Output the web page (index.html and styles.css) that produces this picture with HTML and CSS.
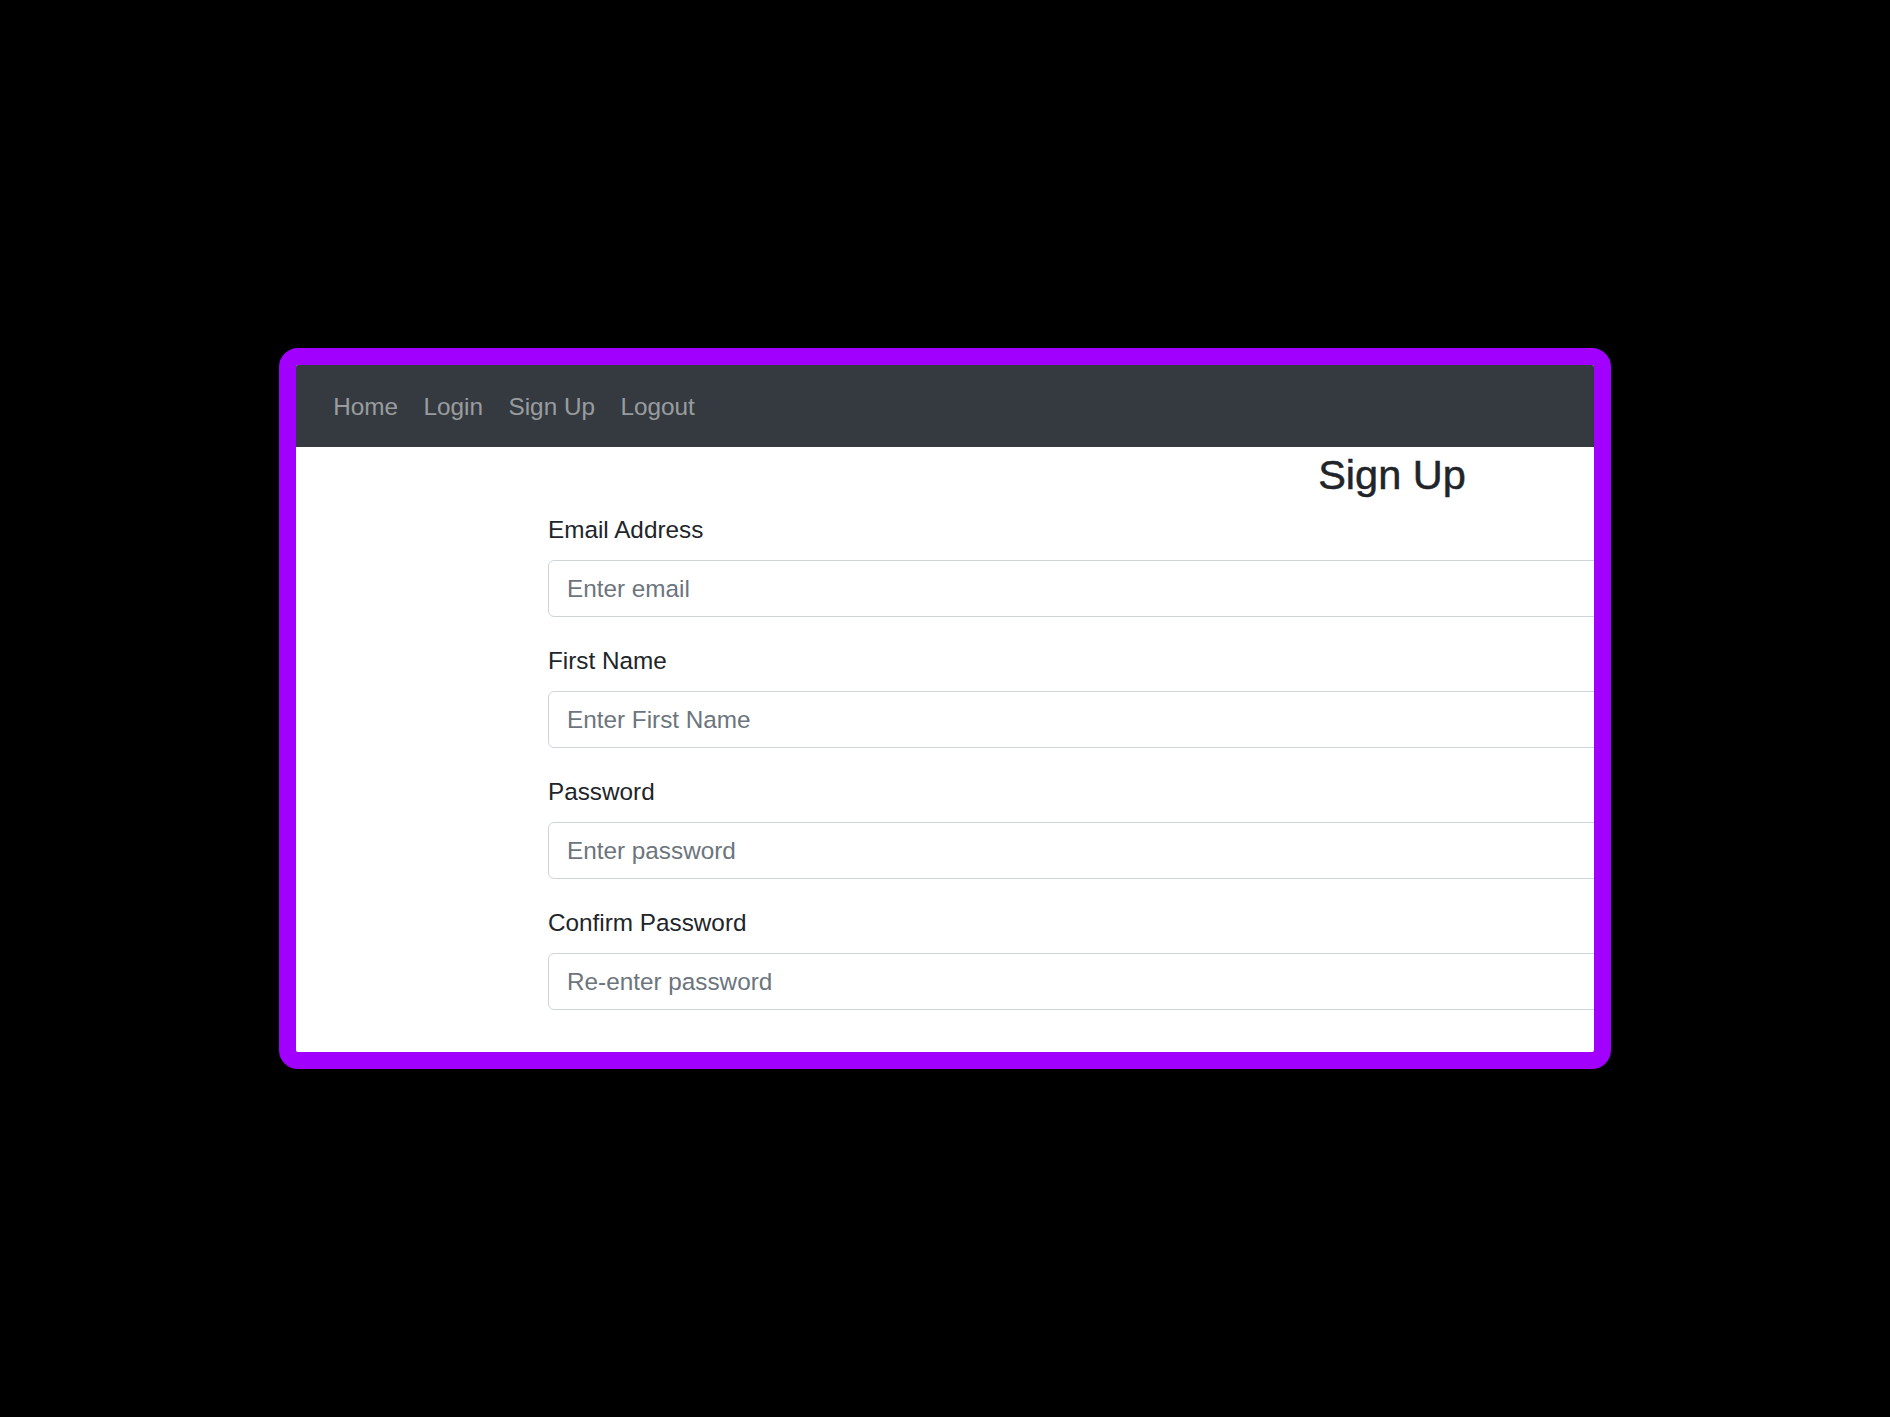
FILE: index.html
```html
<!DOCTYPE html>
<html lang="en">
<head>
<meta charset="utf-8">
<title>Sign Up</title>
<link rel="stylesheet" href="styles.css">
</head>
<body>
  <div class="frame">
    <div class="app">
      <nav class="navbar">
        <a class="nav-link" href="#">Home</a>
        <a class="nav-link" href="#">Login</a>
        <a class="nav-link" href="#">Sign Up</a>
        <a class="nav-link" href="#">Logout</a>
      </nav>
      <main class="content">
        <form class="signup">
          <h3 class="title">Sign Up</h3>
          <div class="group">
            <label class="label" for="email">Email Address</label>
            <input class="control" id="email" type="email" placeholder="Enter email">
          </div>
          <div class="group">
            <label class="label" for="first">First Name</label>
            <input class="control" id="first" type="text" placeholder="Enter First Name">
          </div>
          <div class="group">
            <label class="label" for="pw">Password</label>
            <input class="control" id="pw" type="password" placeholder="Enter password">
          </div>
          <div class="group">
            <label class="label" for="pw2">Confirm Password</label>
            <input class="control" id="pw2" type="password" placeholder="Re-enter password">
          </div>
        </form>
      </main>
    </div>
  </div>
</body>
</html>
```

FILE: styles.css
```css
* { box-sizing: border-box; }

html, body {
  margin: 0;
  background: #000;
}

body {
  padding: 348px 0 0 279px;
  font-family: "Liberation Sans", Arial, sans-serif;
  color: #212529;
}

.frame {
  width: 1332px;
  height: 721px;
  border: 17px solid #a100ff;
  border-radius: 19px;
  background: #a100ff;
  overflow: hidden;
}

.app {
  width: 100%;
  height: 100%;
  background: #fff;
  overflow: hidden;
  display: flex;
  flex-direction: column;
}

.navbar {
  flex: 0 0 82px;
  background: #343a40;
  display: flex;
  align-items: center;
  gap: 1px;
  padding: 2px 25px 0;
}

.nav-link {
  padding: 0 12.25px;
  font-size: 24.3px;
  line-height: 36px;
  color: rgba(255, 255, 255, 0.5);
  text-decoration: none;
}

.content {
  padding-left: 252px;
  flex: 1;
}

.signup {
  width: 1688px;
}

.title {
  margin: 0 0 11px;
  padding-top: 3px;
  font-size: 41.5px;
  line-height: 50px;
  font-weight: 500;
  text-align: center;
  -webkit-text-stroke: 0.5px #212529;
}

.group {
  margin-bottom: 25px;
}

.label {
  display: block;
  font-size: 24.3px;
  line-height: 36px;
  padding-top: 1px;
  margin-bottom: 12px;
}

.control {
  display: block;
  width: 100%;
  height: 57px;
  padding: 1px 18px 0;
  border: 1px solid #ced4da;
  border-radius: 6px;
  font-family: inherit;
  font-size: 24.3px;
  color: #495057;
  background: #fff;
  outline: none;
}

.control::placeholder {
  color: #6c757d;
  opacity: 1;
}
```
